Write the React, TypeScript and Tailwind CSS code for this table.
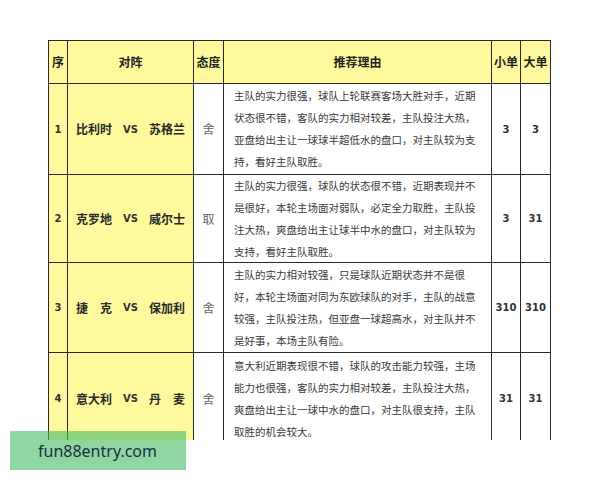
import React from "react";

type Row = {
  n: string;
  home: string;
  away: string;
  att: string;
  lines: string[];
  s: string;
  b: string;
  h: string;
};

const rows: Row[] = [
  {
    n: "1",
    home: "比利时",
    away: "苏格兰",
    att: "舍",
    lines: [
      "主队的实力很强，球队上轮联赛客场大胜对手，近期",
      "状态很不错，客队的实力相对较差，主队投注大热，",
      "亚盘给出主让一球球半超低水的盘口，对主队较为支",
      "持，看好主队取胜。",
    ],
    s: "3",
    b: "3",
    h: "h-[91px]",
  },
  {
    n: "2",
    home: "克罗地",
    away: "威尔士",
    att: "取",
    lines: [
      "主队的实力很强，球队的状态很不错，近期表现并不",
      "是很好，本轮主场面对弱队，必定全力取胜，主队投",
      "注大热，爽盘给出主让球半中水的盘口，对主队较为",
      "支持，看好主队取胜。",
    ],
    s: "3",
    b: "31",
    h: "h-[88px]",
  },
  {
    n: "3",
    home: "捷　克",
    away: "保加利",
    att: "舍",
    lines: [
      "主队的实力相对较强，只是球队近期状态并不是很",
      "好，本轮主场面对同为东欧球队的对手，主队的战意",
      "较强，主队投注热，但亚盘一球超高水，对主队并不",
      "是好事，本场主队有险。",
    ],
    s: "310",
    b: "310",
    h: "h-[90px]",
  },
  {
    n: "4",
    home: "意大利",
    away: "丹　麦",
    att: "舍",
    lines: [
      "意大利近期表现很不错，球队的攻击能力较强，主场",
      "能力也很强，客队的实力相对较差，主队投注大热，",
      "爽盘给出主让一球中水的盘口，对主队很支持，主队",
      "取胜的机会较大。",
    ],
    s: "31",
    b: "31",
    h: "h-[92px]",
  },
];

const cjk = { fontFamily: '"Noto Sans CJK SC", "Liberation Sans", sans-serif' };
const num = { fontFamily: '"DejaVu Sans", "Liberation Sans", sans-serif' };

export default function App() {
  return (
    <div className="relative w-[600px] h-[480px] bg-white overflow-hidden">
      <div className="pt-[40px] pl-[48px]">
        <div className="w-[503px] h-[400px] overflow-hidden">
          <div className="border-l border-t border-[#2a2a2a]">
            {/* header */}
            <div
              className="flex h-[43px] bg-[#fdf99c] text-[12px] font-bold text-[#222]"
              style={cjk}
            >
              <div className="w-[19px] border-r border-b border-[#2a2a2a] flex items-center justify-center">
                序
              </div>
              <div className="w-[126px] border-r border-b border-[#2a2a2a] flex items-center justify-center">
                对阵
              </div>
              <div className="w-[30px] border-r border-b border-[#2a2a2a] flex items-center justify-center">
                态度
              </div>
              <div className="w-[268px] border-r border-b border-[#2a2a2a] flex items-center justify-center">
                推荐理由
              </div>
              <div className="w-[29px] border-r border-b border-[#2a2a2a] flex items-center justify-center">
                小单
              </div>
              <div className="w-[30px] border-r border-b border-[#2a2a2a] flex items-center justify-center">
                大单
              </div>
            </div>
            {rows.map((r) => (
              <div key={r.n} className={`flex ${r.h}`}>
                <div
                  className="w-[19px] bg-[#fdf99c] border-r border-b border-[#2a2a2a] flex items-center justify-center text-[10px] font-bold text-[#333]"
                  style={num}
                >
                  {r.n}
                </div>
                <div className="w-[126px] bg-[#fdf99c] border-r border-b border-[#2a2a2a] flex items-center justify-between pl-[8px] pr-[8px] text-[12px] font-bold text-[#2a2a2a]">
                  <span style={cjk}>{r.home}</span>
                  <span className="text-[10px] text-[#333]" style={num}>
                    VS
                  </span>
                  <span style={cjk}>{r.away}</span>
                </div>
                <div
                  className="w-[30px] border-r border-b border-[#2a2a2a] flex items-center justify-center text-[12px] text-[#666]"
                  style={cjk}
                >
                  {r.att}
                </div>
                <div
                  className="w-[268px] border-r border-b border-[#2a2a2a] flex flex-col justify-center pl-[10px] text-[10.5px] leading-[22px] text-[#3a3a3a] whitespace-nowrap"
                  style={cjk}
                >
                  {r.lines.map((l, i) => (
                    <div key={i}>{l}</div>
                  ))}
                </div>
                <div
                  className="w-[29px] border-r border-b border-[#2a2a2a] flex items-center justify-center text-[10px] font-bold text-[#333]"
                  style={num}
                >
                  {r.s}
                </div>
                <div
                  className="w-[30px] border-r border-b border-[#2a2a2a] flex items-center justify-center text-[10px] font-bold text-[#333]"
                  style={num}
                >
                  {r.b}
                </div>
              </div>
            ))}
          </div>
        </div>
      </div>
      <div
        className="absolute left-[10px] top-[431px] w-[176px] h-[39px] bg-[rgba(74,189,106,0.62)] flex items-center pl-[28px] text-[16px] text-[#1e2f3c]"
        style={{ fontFamily: '"Noto Sans", "DejaVu Sans", sans-serif' }}
      >
        fun88entry.com
      </div>
    </div>
  );
}
